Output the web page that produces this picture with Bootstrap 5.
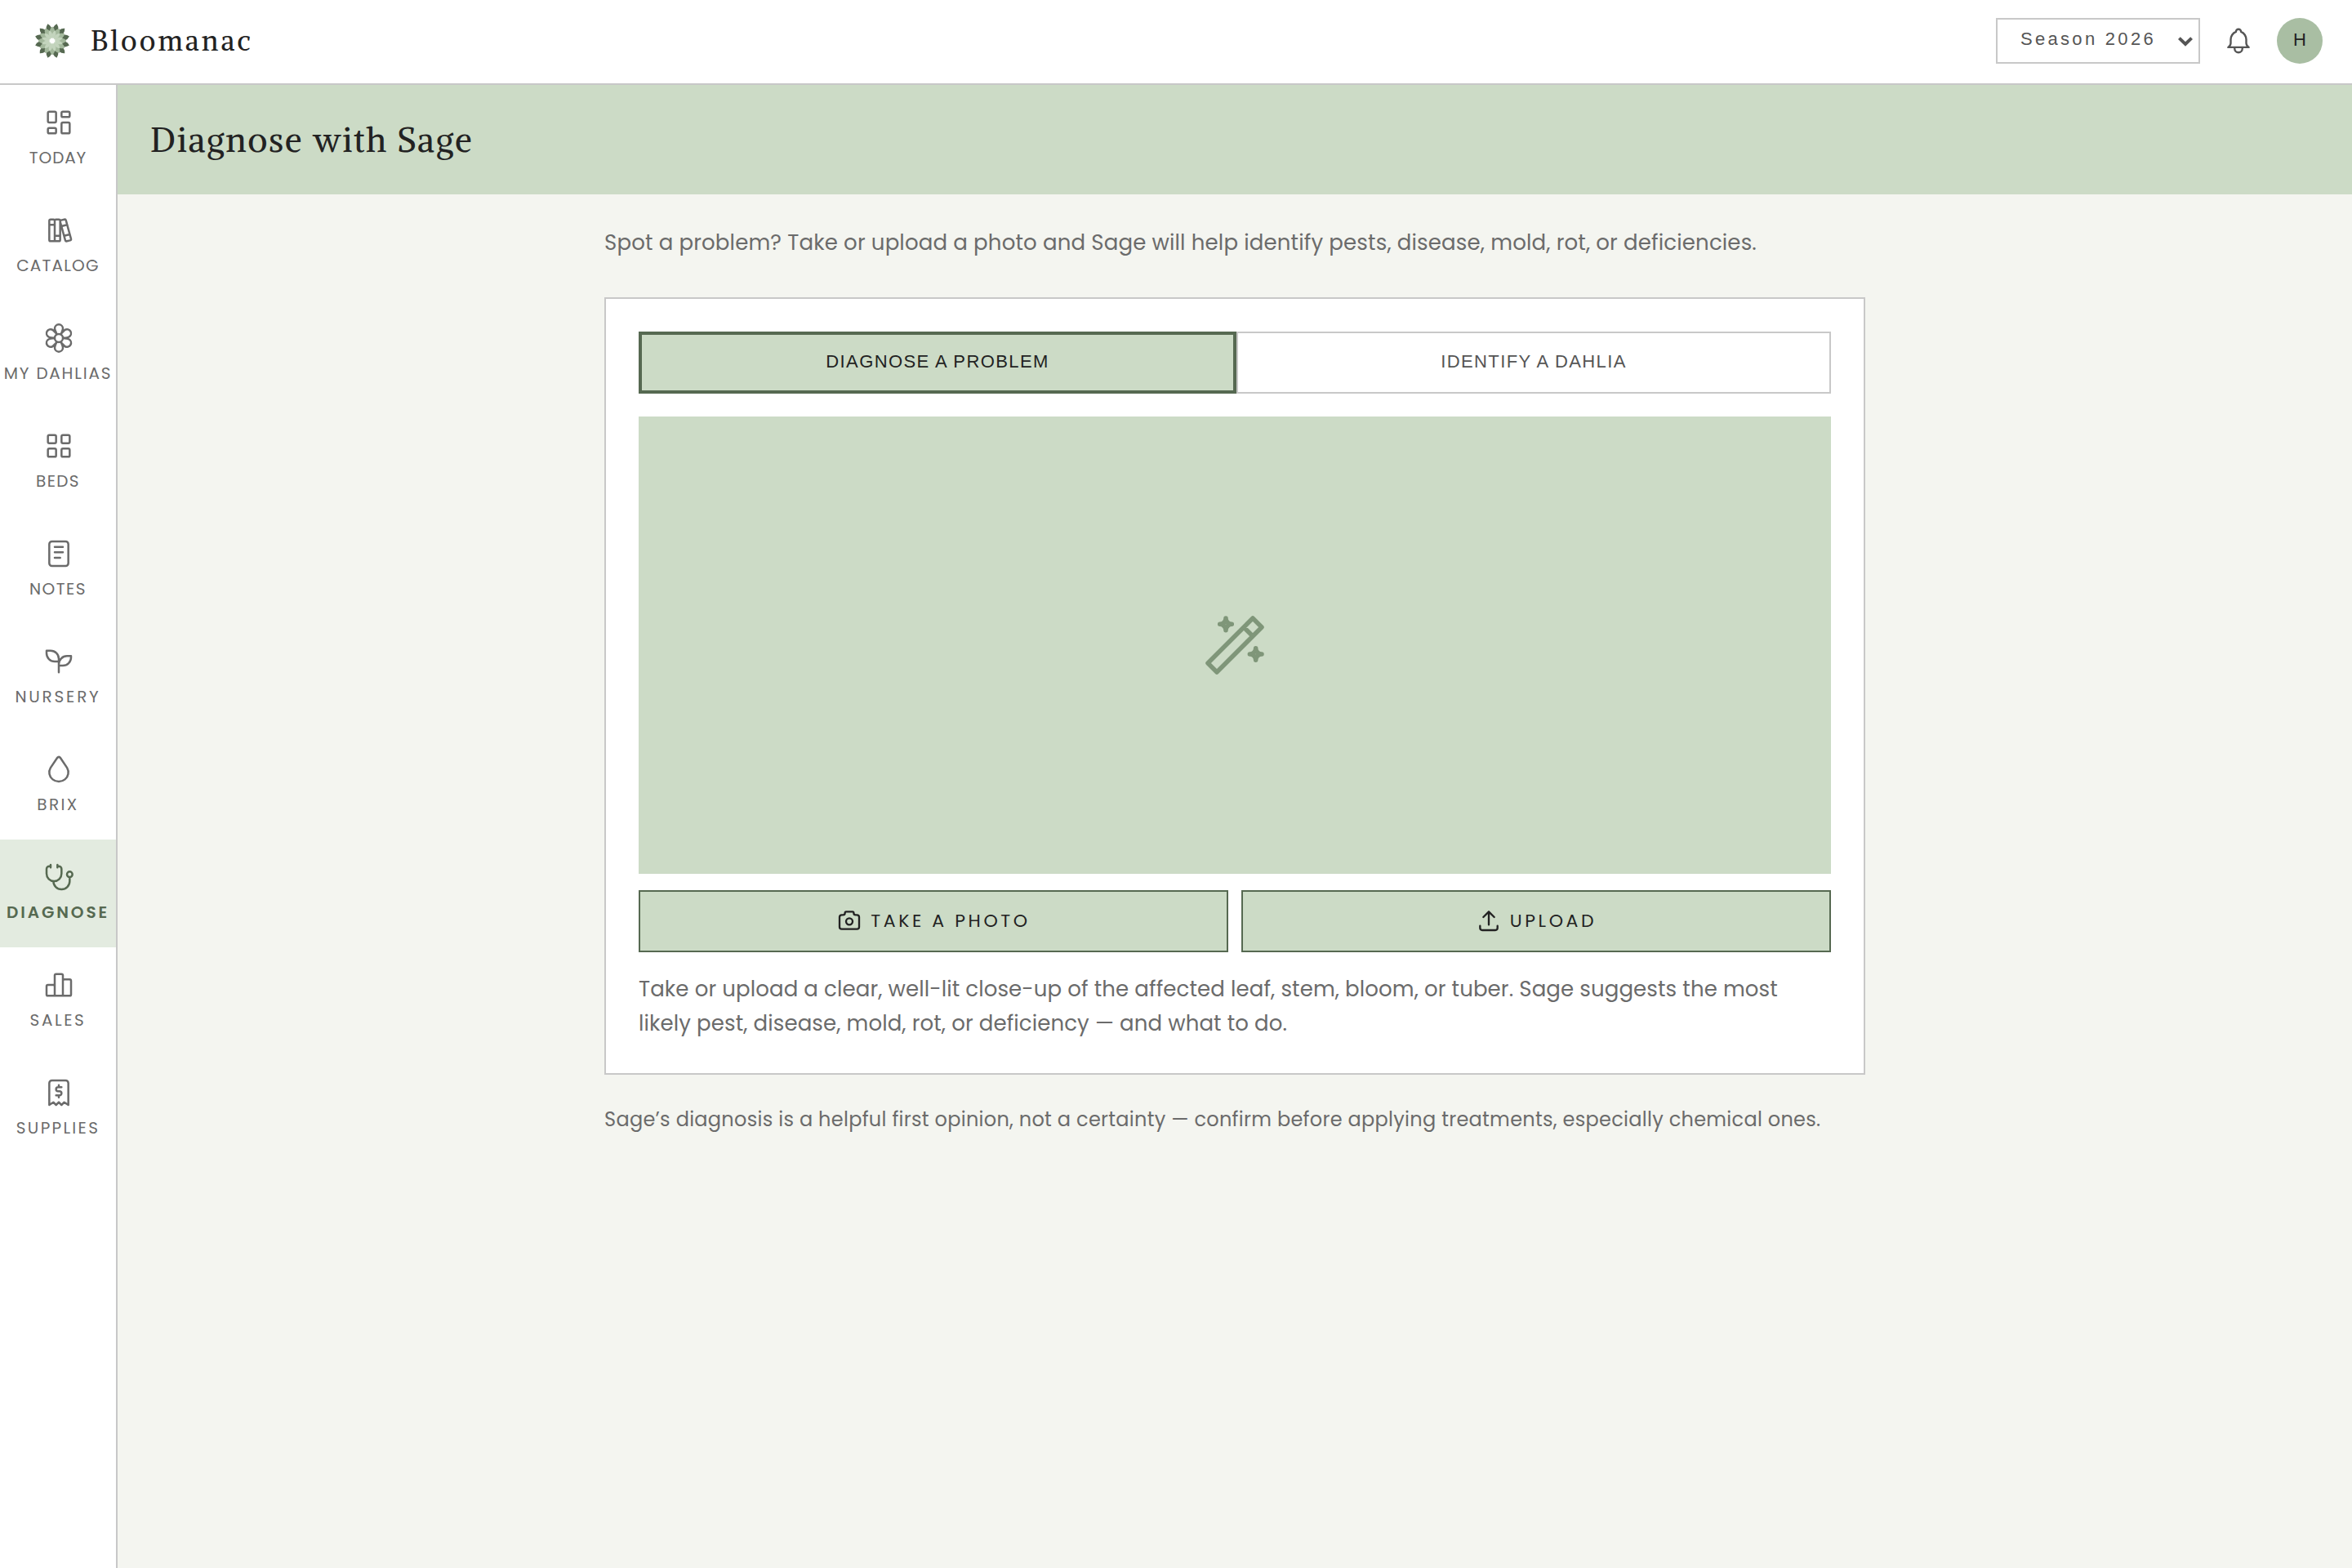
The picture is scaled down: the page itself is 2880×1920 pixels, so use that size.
<!DOCTYPE html>
<html lang="en">
<head>
<meta charset="utf-8">
<title>Bloomanac – Diagnose</title>
<link rel="stylesheet" href="https://cdn.jsdelivr.net/npm/bootstrap@5.3.0/dist/css/bootstrap.min.css">
<style>
:root{--ink:#222;--mute:#6b6b6b;--line:#c8c8c8;--sage:#ccdbc6;--moss:#566951}
body{font-family:Poppins,Inter,sans-serif;background:#f4f5f0;color:var(--mute);font-size:26px;line-height:42px}
svg{fill:none;stroke:currentColor;stroke-width:1.5;stroke-linecap:round;stroke-linejoin:round;flex:none}
.topbar{height:104px;border-bottom:2px solid var(--line);padding:0 36px 2px 40px}
.brand-mark{stroke:none}
.brand-name,.page-title{font-family:Alike,"Liberation Serif",serif;color:var(--ink)}
.brand-name{font-size:34px;letter-spacing:3.1px;line-height:48px;margin-left:23px}
.season,.mode,.who{font-family:"Liberation Sans",sans-serif;font-size:22px}
.season{width:250px;height:56px;border:2px solid var(--line);padding:0 7px 4px 28px;color:#555;letter-spacing:3.3px}
.season svg{margin-top:5px;stroke-width:4;stroke-linecap:butt;stroke-linejoin:miter}
.bell{margin:0 28px;color:#555}
.who{width:56px;height:56px;background:#a9bea3;color:var(--ink);padding-bottom:3px}
.rail{width:144px;border-right:2px solid var(--line)}
.rail a{height:132px;padding-top:26px;color:var(--mute);font-size:20px;line-height:30px;text-decoration:none;white-space:nowrap}
.rail a svg{margin-left:2px}
.rail a span{margin-top:8px}
.rail a.active{background:#e3ebe0;color:var(--moss);font-weight:600}
.hero{height:134px;background:var(--sage);padding:0 40px}
.page-title{font-size:42px;font-weight:400;letter-spacing:1.6px;line-height:52px}
.sheet{width:1544px;padding-top:38px}
.intro{letter-spacing:.155px}
.hint{letter-spacing:.11px}
.note{font-size:24px;line-height:38px;letter-spacing:.29px}
.panel{border:2px solid var(--line);padding:40px;margin:46px 0 36px}
.mode{height:76px;border:2px solid var(--line);letter-spacing:1.4px;color:#555;width:728px;padding-bottom:3px}
.mode.active{border:4px solid var(--moss);background:var(--sage);color:var(--ink);width:732px}
.preview{height:560px;background:var(--sage);margin:28px 0 20px;color:#7f9679}
.act{height:76px;border:2px solid var(--moss);background:var(--sage);color:var(--ink);font-size:22px;letter-spacing:3.6px;gap:10px;padding-bottom:1px}
.act svg{stroke-width:1.75;margin-top:-2px}
</style>
</head>
<body class="min-vh-100 d-flex flex-column">
<header class="topbar bg-white d-flex align-items-center">
  <svg class="brand-mark" width="48" height="48" viewBox="-24 -24 48 48">
    <defs>
      <path id="p1" d="M0 -8L-3.4 -15.5Q-3 -19 0 -21.6Q3 -19 3.4 -15.5Z"/>
      <path id="p2" d="M0 -4C-4.4 -9 -4 -14 0 -17.4C4 -14 4.4 -9 0 -4Z"/>
      <path id="p3" d="M0 -2.6C-2.8 -6 -2.8 -10 0 -13.2C2.8 -10 2.8 -6 0 -2.6Z"/>
    </defs>
    <g id="flower"></g>
  </svg>
  <span class="brand-name">Bloomanac</span>
  <div class="ms-auto d-flex align-items-center">
    <div class="season d-flex align-items-center justify-content-between"><span>Season 2026</span>
      <svg width="18" height="12" viewBox="0 0 18 12"><path d="M1.4 1.6L9 9L16.6 1.6"/></svg>
    </div>
    <svg class="bell" width="38" height="38" viewBox="0 0 24 24"><path d="M10 5a2 2 0 1 1 4 0a7 7 0 0 1 4 6v3a4 4 0 0 0 2 3h-16a4 4 0 0 0 2 -3v-3a7 7 0 0 1 4 -6M9 17v1a3 3 0 0 0 6 0v-1"/></svg>
    <div class="who rounded-circle d-flex align-items-center justify-content-center">H</div>
  </div>
</header>
<div class="d-flex flex-grow-1">
  <nav class="rail bg-white d-flex flex-column flex-shrink-0" id="rail"></nav>
  <main class="flex-grow-1">
    <div class="hero d-flex align-items-center"><h1 class="page-title m-0">Diagnose with Sage</h1></div>
    <div class="sheet mx-auto">
      <p class="intro m-0">Spot a problem? Take or upload a photo and Sage will help identify pests, disease, mold, rot, or deficiencies.</p>
      <section class="panel bg-white">
        <div class="d-flex">
          <div class="mode active d-flex align-items-center justify-content-center">DIAGNOSE A PROBLEM</div>
          <div class="mode d-flex align-items-center justify-content-center">IDENTIFY A DAHLIA</div>
        </div>
        <div class="preview d-flex align-items-center justify-content-center">
          <svg width="88" height="88" viewBox="0 0 24 24"><path d="M6 21l15 -15l-3 -3l-15 15l3 3M15 6l3 3M9 3a2 2 0 0 0 2 2a2 2 0 0 0 -2 2a2 2 0 0 0 -2 -2a2 2 0 0 0 2 -2M19 13a2 2 0 0 0 2 2a2 2 0 0 0 -2 2a2 2 0 0 0 -2 -2a2 2 0 0 0 2 -2"/></svg>
        </div>
        <div class="d-flex gap-3">
          <div class="act d-flex align-items-center justify-content-center flex-fill w-50"><svg width="32" height="32" viewBox="0 0 24 24"><path d="M5 7h1a2 2 0 0 0 2 -2a1 1 0 0 1 1 -1h6a1 1 0 0 1 1 1a2 2 0 0 0 2 2h1a2 2 0 0 1 2 2v9a2 2 0 0 1 -2 2h-14a2 2 0 0 1 -2 -2v-9a2 2 0 0 1 2 -2M9 13a3 3 0 1 0 6 0a3 3 0 0 0 -6 0"/></svg><span>TAKE A PHOTO</span></div>
          <div class="act d-flex align-items-center justify-content-center flex-fill w-50"><svg width="32" height="32" viewBox="0 0 24 24"><path d="M4 17v2a2 2 0 0 0 2 2h12a2 2 0 0 0 2 -2v-2M7 9l5 -5l5 5M12 4v12"/></svg><span>UPLOAD</span></div>
        </div>
        <p class="hint mb-0 mt-4">Take or upload a clear, well-lit close-up of the affected leaf, stem, bloom, or tuber. Sage suggests the most<br>likely pest, disease, mold, rot, or deficiency — and what to do.</p>
      </section>
      <p class="note m-0">Sage’s diagnosis is a helpful first opinion, not a certainty — confirm before applying treatments, especially chemical ones.</p>
    </div>
  </main>
</div>
<script src="https://cdn.jsdelivr.net/npm/bootstrap@5.3.0/dist/js/bootstrap.bundle.min.js"></script>
<script>
// label, tracking in px, icon path on a 24-unit grid
const items=[
["TODAY",.9,"M5 4h4a1 1 0 0 1 1 1v6a1 1 0 0 1 -1 1h-4a1 1 0 0 1 -1 -1v-6a1 1 0 0 1 1 -1M5 16h4a1 1 0 0 1 1 1v2a1 1 0 0 1 -1 1h-4a1 1 0 0 1 -1 -1v-2a1 1 0 0 1 1 -1M15 12h4a1 1 0 0 1 1 1v6a1 1 0 0 1 -1 1h-4a1 1 0 0 1 -1 -1v-6a1 1 0 0 1 1 -1M15 4h4a1 1 0 0 1 1 1v2a1 1 0 0 1 -1 1h-4a1 1 0 0 1 -1 -1v-2a1 1 0 0 1 1 -1"],
["CATALOG",1.2,"M5 5a1 1 0 0 1 1 -1h2a1 1 0 0 1 1 1v14a1 1 0 0 1 -1 1h-2a1 1 0 0 1 -1 -1zM9 5a1 1 0 0 1 1 -1h2a1 1 0 0 1 1 1v14a1 1 0 0 1 -1 1h-2a1 1 0 0 1 -1 -1zM5 8h4M9 16h4M13.803 4.56l2.184 -.53c.562 -.135 1.133 .19 1.282 .732l3.695 13.418a1.02 1.02 0 0 1 -.634 1.219l-.133 .041l-2.184 .53c-.562 .135 -1.133 -.19 -1.282 -.732l-3.695 -13.418a1.02 1.02 0 0 1 .634 -1.219zM14 9l4 -1M16 16l3.923 -.98"],
["MY DAHLIAS",1.8,"M9 12a3 3 0 1 0 6 0a3 3 0 1 0 -6 0M12 2a3 3 0 0 1 3 3c0 .562 -.259 1.442 -.776 2.64l-.724 1.36l1.76 -1.893c.499 -.6 .922 -1 1.27 -1.205a2.968 2.968 0 0 1 4.07 1.099a3.011 3.011 0 0 1 -1.09 4.098c-.374 .217 -.99 .396 -1.846 .535l-2.664 .366l2.4 .326c1 .145 1.698 .337 2.11 .576a3.011 3.011 0 0 1 1.09 4.098a2.968 2.968 0 0 1 -4.07 1.098c-.348 -.202 -.771 -.604 -1.27 -1.205l-1.76 -1.893l.724 1.36c.516 1.199 .776 2.079 .776 2.64a3 3 0 0 1 -6 0c0 -.562 .259 -1.442 .776 -2.64l.724 -1.36l-1.76 1.893c-.499 .601 -.922 1 -1.27 1.205a2.968 2.968 0 0 1 -4.07 -1.098a3.011 3.011 0 0 1 1.09 -4.098c.374 -.218 .99 -.396 1.846 -.536l2.664 -.366l-2.4 -.325c-1 -.145 -1.698 -.337 -2.11 -.576a3.011 3.011 0 0 1 -1.09 -4.099a2.968 2.968 0 0 1 4.07 -1.099c.348 .203 .771 .604 1.27 1.205l1.76 1.894c-1 -2.292 -1.5 -3.625 -1.5 -4a3 3 0 0 1 3 -3"],
["BEDS",1.4,"M5 4h4a1 1 0 0 1 1 1v4a1 1 0 0 1 -1 1h-4a1 1 0 0 1 -1 -1v-4a1 1 0 0 1 1 -1M15 4h4a1 1 0 0 1 1 1v4a1 1 0 0 1 -1 1h-4a1 1 0 0 1 -1 -1v-4a1 1 0 0 1 1 -1M5 14h4a1 1 0 0 1 1 1v4a1 1 0 0 1 -1 1h-4a1 1 0 0 1 -1 -1v-4a1 1 0 0 1 1 -1M15 14h4a1 1 0 0 1 1 1v4a1 1 0 0 1 -1 1h-4a1 1 0 0 1 -1 -1v-4a1 1 0 0 1 1 -1"],
["NOTES",1.5,"M5 5a2 2 0 0 1 2 -2h10a2 2 0 0 1 2 2v14a2 2 0 0 1 -2 2h-10a2 2 0 0 1 -2 -2zM9 7h6M9 11h6M9 15h4"],
["NURSERY",2.8,"M12 10a6 6 0 0 0 -6 -6h-3v2a6 6 0 0 0 6 6h3M12 14a6 6 0 0 1 6 -6h3v1a6 6 0 0 1 -6 6h-3M12 20v-10"],
["BRIX",2.4,"M7.502 19.423c2.602 2.105 6.395 2.105 8.996 0c2.602 -2.105 3.262 -5.708 1.566 -8.546l-4.89 -7.26c-.42 -.625 -1.287 -.803 -1.936 -.397a1.376 1.376 0 0 0 -.41 .397l-4.893 7.26c-1.695 2.838 -1.035 6.441 1.567 8.546"],
["DIAGNOSE",2.9,"M6 4h-1a2 2 0 0 0 -2 2v3.5a5.5 5.5 0 0 0 11 0v-3.5a2 2 0 0 0 -2 -2h-1M8 15a6 6 0 1 0 12 0v-3M11 3v2M6 3v2M18 10a2 2 0 1 0 4 0a2 2 0 1 0 -4 0"],
["SALES",2.6,"M3 13a1 1 0 0 1 1 -1h4a1 1 0 0 1 1 1v6a1 1 0 0 1 -1 1h-4a1 1 0 0 1 -1 -1zM15 9a1 1 0 0 1 1 -1h4a1 1 0 0 1 1 1v10a1 1 0 0 1 -1 1h-4a1 1 0 0 1 -1 -1zM9 5a1 1 0 0 1 1 -1h4a1 1 0 0 1 1 1v14a1 1 0 0 1 -1 1h-4a1 1 0 0 1 -1 -1zM4 20h14"],
["SUPPLIES",2.3,"M5 21v-16a2 2 0 0 1 2 -2h10a2 2 0 0 1 2 2v16l-3 -2l-2 2l-2 -2l-2 2l-2 -2l-3 2M14 8h-2.5a1.5 1.5 0 0 0 0 3h1a1.5 1.5 0 0 1 0 3h-2.5m2 0v1.5m0 -9v1.5"]];
document.getElementById('rail').innerHTML=items.map(([t,ls,d])=>`<a href="#" class="d-flex flex-column align-items-center${t=='DIAGNOSE'?' active':''}"><svg width="40" height="40" viewBox="0 0 24 24"><path d="${d}"/></svg><span style="letter-spacing:${ls}px">${t}</span></a>`).join('');
// three rings of twelve petals, drawn from the outside in
let f='';
for(const [id,c,o] of [['p1','#566951',15],['p2','#a3b89c',0],['p3','#c3d4bd',15]])for(let i=0;i<12;i++)f+=`<use href="#${id}" fill="${c}" transform="rotate(${i*30+o})"/>`;
document.getElementById('flower').innerHTML=f+'<circle r="2.8" fill="#fff"/>';
</script>
</body>
</html>
